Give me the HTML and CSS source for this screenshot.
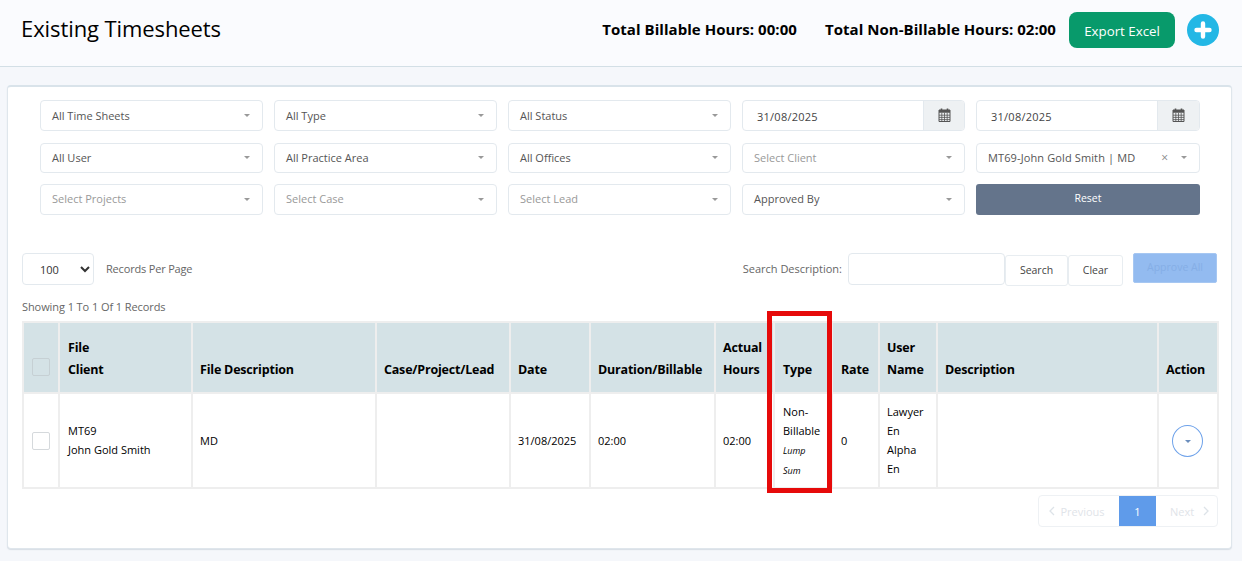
FILE: index.html
```html
<!DOCTYPE html>
<html lang="en">
<head>
<meta charset="utf-8">
<title>Existing Timesheets</title>
<link rel="stylesheet" href="styles.css">
</head>
<body>
<header class="topbar">
  <h1 class="title">Existing Timesheets</h1>
  <div class="totals">
    <span class="total total-a">Total Billable Hours: 00:00</span>
    <span class="total total-b">Total Non-Billable Hours: 02:00</span>
    <button class="export">Export Excel</button>
    <span class="add"><svg width="18" height="18" viewBox="0 0 18 18"><path d="M9 2.5v13M2.5 9h13" stroke="#fff" stroke-width="4.4" stroke-linecap="round"/></svg></span>
  </div>
</header>
<main class="card">
  <section class="filters">
    <div class="sel"><span>All Time Sheets</span><i class="caret"></i></div>
    <div class="sel"><span>All Type</span><i class="caret"></i></div>
    <div class="sel"><span>All Status</span><i class="caret"></i></div>
    <div class="date"><span class="date-val">31/08/2025</span><span class="date-btn"><svg width="13" height="14" viewBox="0 0 13 14"><path d="M3.5 0.5v2.5M9.5 0.5v2.5" stroke="#555" stroke-width="1.6"/><path d="M1 2h11v11.5H1z" fill="none" stroke="#555"/><path d="M1 2h11v2.8H1z" fill="#555"/><path d="M1 7.2h11M1 9.4h11M1 11.6h11M3.8 4.8v8.6M6.5 4.8v8.6M9.2 4.8v8.6" stroke="#555" stroke-width=".8"/></svg></span></div>
    <div class="date date-last"><span class="date-val">31/08/2025</span><span class="date-btn"><svg width="13" height="14" viewBox="0 0 13 14"><path d="M3.5 0.5v2.5M9.5 0.5v2.5" stroke="#555" stroke-width="1.6"/><path d="M1 2h11v11.5H1z" fill="none" stroke="#555"/><path d="M1 2h11v2.8H1z" fill="#555"/><path d="M1 7.2h11M1 9.4h11M1 11.6h11M3.8 4.8v8.6M6.5 4.8v8.6M9.2 4.8v8.6" stroke="#555" stroke-width=".8"/></svg></span></div>

    <div class="sel"><span>All User</span><i class="caret"></i></div>
    <div class="sel"><span>All Practice Area</span><i class="caret"></i></div>
    <div class="sel"><span>All Offices</span><i class="caret"></i></div>
    <div class="sel ph"><span>Select Client</span><i class="caret"></i></div>
    <div class="sel sel-wide"><span>MT69-John Gold Smith | MD</span><b class="clear-x">×</b><i class="caret"></i></div>

    <div class="sel ph low"><span>Select Projects</span><i class="caret"></i></div>
    <div class="sel ph low"><span>Select Case</span><i class="caret"></i></div>
    <div class="sel ph low"><span>Select Lead</span><i class="caret"></i></div>
    <div class="sel low"><span>Approved By</span><i class="caret"></i></div>
    <button class="reset">Reset</button>
  </section>

  <section class="toolbar">
    <div class="tb-left">
      <select class="perpage"><option>100</option></select>
      <span class="muted">Records Per Page</span>
    </div>
    <div class="tb-right">
      <span class="muted">Search Description:</span>
      <input class="search" type="text" aria-label="Search Description">
      <button class="tb-btn btn-search">Search</button>
      <button class="tb-btn btn-clear">Clear</button>
      <button class="approve">Approve All</button>
    </div>
  </section>

  <p class="showing">Showing 1 To 1 Of 1 Records</p>

  <div class="table-wrap">
    <table class="grid">
      <colgroup>
        <col class="c1"><col class="c2"><col class="c3"><col class="c4"><col class="c5"><col class="c6"><col class="c7"><col class="c8"><col class="c9"><col class="c10"><col class="c11"><col class="c12">
      </colgroup>
      <thead>
        <tr>
          <th class="chk-cell"><span class="chk chk-head"></span></th>
          <th class="pad8">File<br>Client</th>
          <th>File Description</th>
          <th>Case/Project/Lead</th>
          <th>Date</th>
          <th>Duration/Billable</th>
          <th>Actual<br>Hours</th>
          <th class="pad8">Type</th>
          <th class="pad8">Rate</th>
          <th>User<br>Name</th>
          <th>Description</th>
          <th>Action</th>
        </tr>
      </thead>
      <tbody>
        <tr>
          <td class="chk-cell"><span class="chk"></span></td>
          <td class="pad8">MT69<br>John Gold Smith</td>
          <td class="one">MD</td>
          <td></td>
          <td class="one">31/08/2025</td>
          <td class="one">02:00</td>
          <td class="one">02:00</td>
          <td class="pad8 type-cell">Non-<br>Billable<br><em class="sub">Lump<br>Sum</em></td>
          <td class="pad8 one">0</td>
          <td>Lawyer<br>En<br>Alpha<br>En</td>
          <td></td>
          <td class="act-cell"><span class="act"><i class="caret caret-blue"></i></span></td>
        </tr>
      </tbody>
    </table>
    <div class="highlight"></div>
  </div>

  <nav class="pager">
    <span class="pg pg-prev"><svg width="6" height="10" viewBox="0 0 6 10"><path d="M5 1 1 5l4 4" fill="none" stroke="#dde3e8" stroke-width="1.3"/></svg>Previous</span>
    <span class="pg pg-on">1</span>
    <span class="pg pg-next">Next<svg width="6" height="10" viewBox="0 0 6 10"><path d="m1 1 4 4-4 4" fill="none" stroke="#dde3e8" stroke-width="1.3"/></svg></span>
  </nav>
</main>
</body>
</html>
```

FILE: styles.css
```css
* { box-sizing: border-box; }
html, body { margin: 0; height: 561px; overflow: hidden; }
body {
  background: #f5f7fb;
  font-family: "Open Sans", "Noto Sans", sans-serif;
  font-size: 11px;
  color: #000;
}
button { font-family: inherit; cursor: pointer; }

.topbar {
  height: 67px;
  background: #fafbfe;
  border-bottom: 1px solid #d3dfe6;
  display: flex;
  align-items: center;
  justify-content: space-between;
  padding: 0 23px 7px 21px;
}
.title { margin: 0 0 4px; font-size: 22px; font-weight: 400; letter-spacing: -0.09px; color: #000; }
.totals { display: flex; align-items: center; }
.total { font-size: 15px; font-weight: 700; letter-spacing: 0.05px; color: #000; margin-bottom: 2px; }
.total-a { margin-right: 28px; }
.total-b { margin-right: 13px; }
.export {
  width: 106px; height: 36px;
  margin-right: 12px;
  background: #089a6b;
  color: #fff;
  border: 0;
  border-radius: 8px;
  font-size: 13.3px;
  padding: 2px 0 0;
}
.add {
  width: 32px; height: 32px;
  border-radius: 50%;
  background: #23b7e5;
  display: flex; align-items: center; justify-content: center;
}

.card {
  margin: 18px 10px 0 7px;
  height: 464px;
  background: #fff;
  border: 1px solid #dfe6ec;
  border-top: 2px solid #d9e3ea;
  border-radius: 4px;
  padding: 13px 14px 0 14px;
  box-shadow: 0 1px 1px rgba(160,175,190,.35);
}

.filters {
  margin: 0 17px 0 18px;
  display: grid;
  grid-template-columns: repeat(4, 223px) 224px;
  grid-template-rows: 31px 30px 31px;
  column-gap: 11px;
  row-gap: 11.5px;
}
.sel {
  display: flex; align-items: center;
  border: 1px solid #e3e9ee;
  border-radius: 4px;
  background: #fff;
  padding: 0 12px 0 11px;
  color: #555;
  white-space: nowrap;
}
.sel span { flex: 1; }
.sel.ph { color: #999; }
.sel.low span { padding-bottom: 2px; }
.sel-wide span { letter-spacing: 0.12px; }
.caret {
  width: 0; height: 0;
  border-left: 3.5px solid transparent;
  border-right: 3.5px solid transparent;
  border-top: 3.5px solid #999;
}
.clear-x { font-weight: 400; color: #888; margin-right: 13px; font-size: 12px; }
.date {
  display: flex;
  border: 1px solid #e3e9ee;
  border-radius: 4px;
  overflow: hidden;
}
.date-val { flex: 1; display: flex; align-items: center; padding: 1px 0 0 14px; color: #444; letter-spacing: 0.25px; }
.date-btn {
  width: 41px;
  background: #eef1f3;
  border-left: 1px solid #e3e9ee;
  display: flex; align-items: center; justify-content: center;
  padding-bottom: 2px;
}
.date-last .date-btn { width: 42px; }
.reset {
  background: #64748b;
  border: 0;
  border-radius: 3px;
  color: #fff;
  font-size: 10.5px;
  padding: 0 0 3px;
}

.toolbar {
  margin-top: 38px;
  display: flex;
  justify-content: space-between;
  align-items: flex-start;
}
.tb-left, .tb-right { display: flex; align-items: flex-start; }
.muted { color: #666; line-height: 31px; }
.tb-left .muted { letter-spacing: -0.18px; }
.perpage {
  width: 72px; height: 32px;
  margin-right: 12px;
  background: #fff;
  border: 1px solid #e3e9ee;
  border-radius: 4px;
  font: 11px "Open Sans", sans-serif;
  color: #333;
  padding-left: 13px;
}
.search {
  width: 157px; height: 32px;
  margin-left: 6px;
  border: 1px solid #e3e9ee;
  border-radius: 4px;
  background: #fff;
}
.tb-btn {
  height: 31px;
  margin-top: 2px;
  background: #fff;
  border: 1px solid #e8edf1;
  border-radius: 3px;
  color: #444;
  font-size: 10.5px;
  padding: 0 0 2px;
}
.btn-search { width: 63px; }
.btn-clear { width: 55px; }
.approve {
  width: 84px; height: 30px;
  margin-left: 10px;
  background: #93bbf0;
  border: 1px solid #a6c7f2;
  border-radius: 2px;
  color: #85aee6;
  font-size: 10.5px;
  padding: 0 0 3px;
}

.showing { margin: 13px 0 0; height: 22px; line-height: 16px; color: #666; font-size: 11px; letter-spacing: -0.08px; }

.table-wrap { position: relative; width: 1196px; }
.grid {
  width: 1195px;
  table-layout: fixed;
  border-collapse: collapse;
  border: 2px solid #eeeeee;
}
.c1 { width: 36px; } .c2 { width: 133px; } .c3 { width: 184px; } .c4 { width: 134px; }
.c5 { width: 80px; } .c6 { width: 125px; } .c7 { width: 59px; } .c8 { width: 58px; }
.c9 { width: 47px; } .c10 { width: 58px; } .c11 { width: 221px; } .c12 { width: 60px; }
.grid th, .grid td { border: 2px solid #eeeeee; padding: 0 0 0 7px; }
.grid th {
  height: 71px;
  background: #d4e2e6;
  font-size: 12.5px;
  letter-spacing: -0.2px;
  line-height: 22px;
  font-weight: 700;
  text-align: left;
  vertical-align: bottom;
  padding-bottom: 11px;
  white-space: nowrap;
}
.grid td {
  height: 95px;
  font-size: 11px;
  line-height: 19px;
  vertical-align: middle;
  padding-bottom: 2px;
}
.grid th.pad8, .grid td.pad8 { padding-left: 8px; }
.grid td.one { padding-bottom: 0; }
.grid td.type-cell { padding-bottom: 0; }
.sub { font-size: 9px; }
.grid .chk-cell { padding: 0 0 0 8px; vertical-align: middle; }
.grid th.chk-cell { vertical-align: bottom; padding-bottom: 16px; }
.chk {
  display: block;
  width: 18px; height: 18px;
  background: #fff;
  border: 1px solid #d5d9dc;
  border-radius: 2px;
}
.chk-head { background: #d4e2e6; border-color: #c6d0d4; }
.grid .act-cell { padding: 0 0 0 13px; }
.act {
  width: 31px; height: 32px;
  border: 1px solid #6ea2ea;
  border-radius: 50%;
  display: flex; align-items: center; justify-content: center;
}
.caret-blue { border-top-color: #6b8ebd; border-left-width: 3px; border-right-width: 3px; border-top-width: 3px; margin-top: 2px; }

.highlight {
  position: absolute;
  left: 745px; top: -10px;
  width: 65px; height: 182px;
  border: 5px solid #e60a0a;
  pointer-events: none;
}

.pager {
  margin: 6px -1px 0 auto;
  width: 180px; height: 32px;
  display: flex;
  border: 1px solid #eef1f4;
  border-radius: 4px;
  overflow: hidden;
  color: #dfe4e9;
}
.pg { display: flex; align-items: center; justify-content: center; font-size: 11px; }
.pg-prev { width: 80px; gap: 5px; padding-right: 4px; }
.pg-on { width: 37px; background: #5f9bea; color: #fff; }
.pg-next { flex: 1; gap: 9px; padding-left: 6px; }
```
